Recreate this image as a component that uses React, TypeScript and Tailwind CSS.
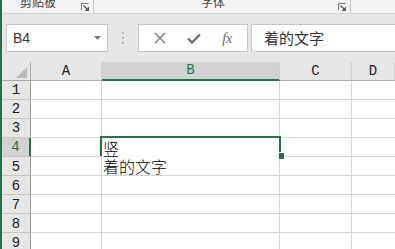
import React from "react"

const cjk = "font-['Noto_Sans_CJK_SC',sans-serif]"

function Launcher() {
    return (
        <svg width="9" height="8" viewBox="0 0 9 8" className="shrink-0">
            <path d="M0.5 7 V0.5 H7.5" stroke="#7a7a7a" fill="none" strokeWidth="1" />
            <path d="M2.5 2.5 L6.5 6.5" stroke="#5a5a5a" strokeWidth="1.2" />
            <path d="M8 3.5 V8 H3.5 Z" fill="#5a5a5a" />
        </svg>
    )
}

const cols = [
    { label: "A", w: "w-[71px]" },
    { label: "B", w: "w-[178px]" },
    { label: "C", w: "w-[72px]" },
    { label: "D", w: "flex-1" },
]

function Row({ n }: { n: number }) {
    const active = n === 4
    const serif = n <= 4
    return (
        <div className="flex h-[19px] shrink-0">
            <div className={`w-[29px] shrink-0 flex items-center justify-center border-b border-[#c6c6c6] ${active ? "bg-[#d2d2d2] border-r-2 border-r-[#217346] text-[#217346]" : "bg-[#e6e6e6] border-r border-r-[#9e9e9e] text-[#222]"} ${serif ? "font-['Liberation_Mono',monospace] text-[14px]" : "font-['Liberation_Sans',sans-serif] text-[14px]"}`}>
                {n}
            </div>
            <div className="w-[71px] shrink-0 bg-white border-r border-b border-[#d4d4d4]" />
            {active ? (
                <div className="w-[178px] shrink-0 bg-white border-r border-[#d4d4d4] relative z-10">
                    <div className={`${cjk} font-light text-[16px] leading-[18px] text-black pl-[1px] pt-[1px] whitespace-pre-line`}>
                        {"竖\n着的文字"}
                    </div>
                    <div className="absolute left-[-2px] top-[-2px] w-[181px] h-[2px] bg-[#217346]" />
                    <div className="absolute left-[-2px] top-[-2px] w-[2px] h-[20px] bg-[#217346]" />
                    <div className="absolute left-[177px] top-[-2px] w-[2px] h-[16px] bg-[#217346]" />
                    <div className="absolute left-[177px] top-[15px] w-[5px] h-[6px] bg-[#217346]" />
                </div>
            ) : (
                <div className={`w-[178px] shrink-0 bg-white border-r border-[#d4d4d4] ${n === 3 ? "" : "border-b"}`} />
            )}
            <div className="w-[72px] shrink-0 bg-white border-r border-b border-[#d4d4d4]" />
            <div className="flex-1 bg-white border-b border-[#d4d4d4]" />
        </div>
    )
}

export default function App() {
    return (
        <div className="w-[395px] h-[249px] overflow-hidden flex flex-col border-l-2 border-[#217346] bg-white">
            {/* ribbon group labels */}
            <div className={`h-[14px] shrink-0 flex bg-[#f3f3f3] border-b border-[#d5d5d5] overflow-hidden ${cjk} text-[12px] text-[#444]`}>
                <div className="w-[92px] shrink-0 flex items-start border-r border-[#c8c8c8]">
                    <span className="pl-[18px] leading-[12px] -mt-[4px]">剪贴板</span>
                    <span className="ml-auto mr-[3px] mt-[3px]"><Launcher /></span>
                </div>
                <div className="w-[257px] shrink-0 flex items-start border-r border-[#c8c8c8]">
                    <span className="pl-[107px] leading-[12px] -mt-[4px]">字体</span>
                    <span className="ml-auto mr-[3px] mt-[3px]"><Launcher /></span>
                </div>
            </div>

            {/* formula bar */}
            <div className="h-[48px] shrink-0 bg-[#e6e6e6] flex items-start pt-[10px] pl-[4px]">
                <div className="w-[102px] h-[28px] shrink-0 bg-white border border-[#c6c6c6] flex items-center pl-[6px] pr-[6px]">
                    <span className="font-['Liberation_Sans',sans-serif] text-[14px] text-[#333]">B4</span>
                    <svg width="7" height="4" viewBox="0 0 7 4" className="ml-auto">
                        <path d="M0 0 H7 L3.5 4 Z" fill="#777" />
                    </svg>
                </div>
                <div className="w-[30px] h-[28px] shrink-0 flex flex-col items-center justify-center gap-[3px]">
                    <div className="w-[2px] h-[2px] bg-[#b4b4b4]" />
                    <div className="w-[2px] h-[2px] bg-[#b4b4b4]" />
                    <div className="w-[2px] h-[2px] bg-[#b4b4b4]" />
                </div>
                <div className="w-[110px] h-[28px] shrink-0 bg-white border border-[#c6c6c6] flex items-center justify-around px-[4px]">
                    <svg width="12" height="12" viewBox="0 0 12 12">
                        <path d="M1 1 L11 11 M11 1 L1 11" stroke="#707070" strokeWidth="1.3" />
                    </svg>
                    <svg width="14" height="11" viewBox="0 0 14 11">
                        <path d="M1 5.5 L5 9.5 L13 1.5" stroke="#707070" strokeWidth="2.4" fill="none" />
                    </svg>
                    <span className="font-['Liberation_Serif',serif] italic text-[14px] text-[#666]">fx</span>
                </div>
                <div className={`flex-1 ml-[3px] h-[28px] bg-white border border-r-0 border-[#c6c6c6] flex items-center pl-[12px] ${cjk} text-[15px] text-[#333]`}>
                    着的文字
                </div>
            </div>

            {/* column headers */}
            <div className="flex h-[19px] shrink-0 font-['Liberation_Mono',monospace] text-[14px]">
                <div className="w-[29px] shrink-0 bg-[#e6e6e6] border-r border-b border-[#ababab] flex items-end justify-end pr-[3px] pb-[2px]">
                    <svg width="11" height="11" viewBox="0 0 11 11">
                        <path d="M11 0 V11 H0 Z" fill="#b9b9b9" />
                    </svg>
                </div>
                {cols.map((c) => (
                    <div
                        key={c.label}
                        className={`${c.w} shrink-0 flex items-center justify-center border-r border-[#d0d0d0] ${c.label === "B" ? "bg-[#d2d2d2] border-b-2 border-b-[#217346] text-[#217346]" : "bg-[#e6e6e6] border-b border-b-[#ababab] text-[#222]"}`}
                    >
                        {c.label}
                    </div>
                ))}
            </div>

            {[1, 2, 3, 4, 5, 6, 7, 8, 9].map((n) => (
                <Row key={n} n={n} />
            ))}
        </div>
    )
}
